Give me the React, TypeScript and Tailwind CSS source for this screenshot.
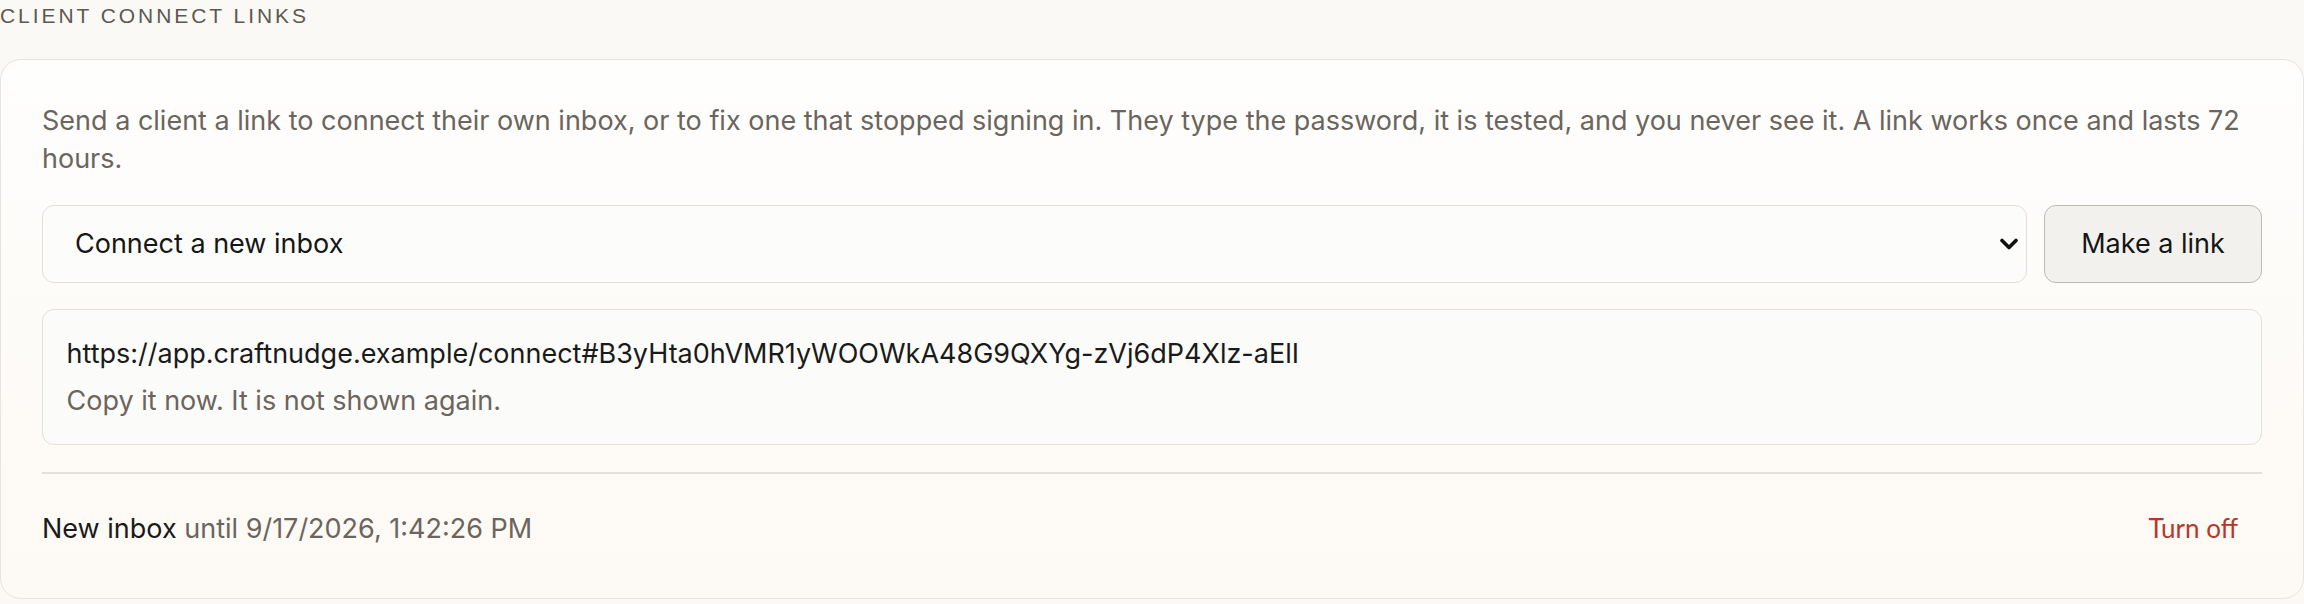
import React from "react";

export default function App() {
  return (
    <div className="min-h-screen w-full bg-[#faf9f6] font-['Inter',sans-serif]">
      <h2 className="font-['Liberation_Sans',Arial,sans-serif] text-[21px] leading-[32px] tracking-[0.14em] uppercase text-[#5d5852]">
        Client connect links
      </h2>
      <div className="mt-[26.5px] rounded-[21px] border-[1.5px] border-[#e7e3dd] bg-gradient-to-b from-[#fefefd] to-[#fdf9f4] px-[41px] pt-[42px] pb-[42px]">
        <p className="text-[27px] leading-[38.4px] text-[#6b655e]">
          Send a client a link to connect their own inbox, or to fix one that stopped signing in. They type the password, it is tested, and you never see it. A link works once and lasts 72 hours.
        </p>
        <div className="mt-[26.5px] flex gap-[17px]">
          <div className="flex h-[78px] flex-1 items-center justify-between rounded-[12px] border-[1.5px] border-[#e3dfd8] bg-[#fcfcfb] pl-[32px] pr-[8px]">
            <span className="text-[27px] text-[#161616]">Connect a new inbox</span>
            <svg width="18" height="12" viewBox="0 0 18 12" fill="none">
              <path d="M2 2.5 L9 9.5 L16 2.5" stroke="#111" strokeWidth="3.6" strokeLinecap="round" strokeLinejoin="round" />
            </svg>
          </div>
          <button className="h-[78px] w-[218px] rounded-[12px] border-[1.5px] border-[#bcbab5] bg-[#f2f1ee] text-[27px] text-[#161616]">
            Make a link
          </button>
        </div>
        <div className="mt-[26px] rounded-[12px] border-[1.5px] border-[#e4e0da] bg-[#fbfbf9] px-[23.5px] pt-[25.5px] pb-[24.5px]">
          <div className="text-[27px] leading-[37.8px] text-[#1a1a1a]">
            https://app.craftnudge.example/connect#B3yHta0hVMR1yWOOWkA48G9QXYg-zVj6dP4Xlz-aElI
          </div>
          <div className="mt-[9px] text-[27px] leading-[37.8px] text-[#6b655e]">
            Copy it now. It is not shown again.
          </div>
        </div>
        <div className="mt-[27px] h-[1.5px] bg-[#e4e0da]" />
        <div className="flex items-center justify-between pt-[36.5px] pb-[7.5px]">
          <div className="text-[27px] leading-[37.8px]">
            <span className="text-[#1a1a1a]">New inbox</span>{" "}
            <span className="text-[#6b655e]">until 9/17/2026, 1:42:26 PM</span>
          </div>
          <button className="pr-[24px] font-['Lato',sans-serif] text-[26px] leading-[37.8px] text-[#b3392b]">
            Turn off
          </button>
        </div>
      </div>
    </div>
  );
}
